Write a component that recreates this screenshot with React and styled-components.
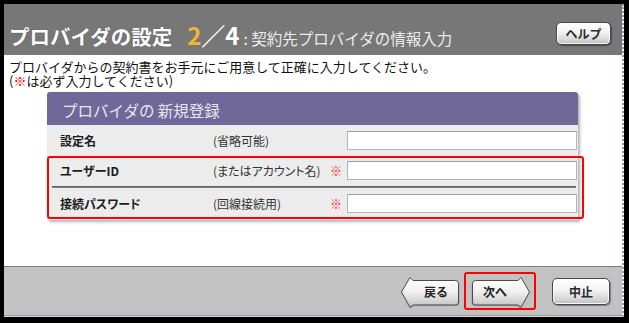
import React, { useId } from "react";
import styled, { createGlobalStyle } from "styled-components";

const Global = createGlobalStyle`
  html, body { margin: 0; padding: 0; background: #000; }
  body { font-family: "Noto Sans CJK JP", "Noto Sans", sans-serif; }
  * { box-sizing: border-box; }
`;

const Screen = styled.div`
  width: 629px;
  height: 323px;
  background: #000;
  padding: 4px 5px 6px 4px;
`;

const Window = styled.div`
  width: 620px;
  height: 313px;
  display: flex;
  flex-direction: column;
  border-right: 2px dotted #8a9cc4;
  border-bottom: 1px solid #d4dcec;
  background: #fff;
`;

const Header = styled.header`
  height: 51px;
  flex: none;
  background: #777777;
  display: flex;
  align-items: flex-start;
  padding: 19px 11px 0 5px;
`;

const TitleRow = styled.div`
  display: flex;
  align-items: baseline;
  height: 24px;
`;

const Title = styled.h1`
  margin: 0;
  font-size: 20.5px;
  line-height: 24px;
  font-weight: 700;
  color: #fff;
  text-shadow: 0 0 1px rgba(0, 0, 0, 0.4);
`;

const Step = styled.span`
  margin-left: 15px;
  font-size: 24px;
  line-height: 24px;
  font-weight: 700;
  color: #fff;
`;

const StepNum = styled.span`
  color: ${(p) => (p.$accent ? "#f2b630" : "#fff")};
`;

const Sub = styled.span`
  margin-left: 4px;
  font-size: 15.5px;
  color: #ececec;
`;

const RoundButton = styled.button`
  width: ${(p) => p.$w}px;
  height: ${(p) => p.$h}px;
  padding: 0;
  border: 1px solid #474747;
  border-radius: 5px;
  background: linear-gradient(#ffffff, #f2f2f2 45%, #d6d6d6 80%, #bdbdbd);
  box-shadow: inset 0 0 0 1px rgba(255, 255, 255, 0.85), 1px 1px 1px rgba(0, 0, 0, 0.35);
  font: 700 12px/1 "Noto Sans CJK JP", sans-serif;
  color: #2a2a2a;
  display: flex;
  align-items: center;
  justify-content: center;
`;

const HelpButton = styled(RoundButton)`
  margin-left: auto;
  margin-top: -1px;
`;

const Content = styled.main`
  flex: 1;
  padding: 5px 0 0 5px;
  background: #fff;
`;

const Lead = styled.p`
  margin: 0;
  font-size: 13px;
  line-height: 14px;
  color: #111;
`;

const LeadLine = styled.span`
  display: block;
  height: 14px;
`;

const Mark = styled.span`
  color: #f00;
`;

const Panel = styled.section`
  position: relative;
  margin: 4px 0 0 38px;
  width: 531px;
  padding-bottom: 1px;
  background: #ececec;
  border-radius: 3px 3px 0 0;
  box-shadow: 2px 2px 3px rgba(0, 0, 0, 0.3);
`;

const PanelHead = styled.h2`
  margin: 0;
  height: 33px;
  padding: 3px 0 0 15px;
  display: flex;
  align-items: center;
  background: #6f6899;
  border-radius: 3px 3px 0 0;
  color: #e9e7f3;
  font-size: 15.5px;
  font-weight: 400;
`;

const Row = styled.div`
  display: grid;
  grid-template-columns: 153px 117px 17px 230px;
  align-items: center;
  height: ${(p) => p.$h}px;
  padding: 0 1px 1px 13px;
`;

const FieldLabel = styled.span`
  font-size: 12px;
  font-weight: 700;
  color: #1b1b1b;
  font-feature-settings: "palt";
`;

const Note = styled.span`
  font-size: 12px;
  color: #333;
  font-feature-settings: "palt";
`;

const Req = styled.span`
  font-size: 12px;
  color: #f22;
`;

const Input = styled.input`
  width: 230px;
  height: 19px;
  border: 1px solid #b4b4b4;
  border-top-color: #a0a0a0;
  background: #fff;
  padding: 0 3px;
  font-size: 12px;
`;

const Divider = styled.div`
  height: 2px;
  margin: 0 2px 0 5px;
  background: linear-gradient(#585858, #8a8a8a);
`;

const Highlight = styled.div`
  position: absolute;
  top: ${(p) => p.$top}px;
  left: ${(p) => p.$left}px;
  width: ${(p) => p.$w}px;
  height: ${(p) => p.$h}px;
  border: 2px solid #ff0000;
  border-radius: 3px;
  pointer-events: none;
`;

const Footer = styled.footer`
  height: 50px;
  flex: none;
  background: #c2c2c2;
  border-top: 1px solid #7c7c7c;
  border-bottom: 1px solid #9c9c9c;
  display: flex;
  align-items: center;
  justify-content: flex-end;
  padding: 1px 12px 0 0;
  gap: 11px;
`;

const NavButton = styled.button`
  position: relative;
  width: 60px;
  height: 34px;
  padding: 0 ${(p) => (p.$dir === "next" ? "12px" : "0")} 0 ${(p) => (p.$dir === "back" ? "12px" : "0")};
  border: 0;
  background: none;
  font: 700 12px/1 "Noto Sans CJK JP", sans-serif;
  color: #222;
  display: flex;
  align-items: center;
  justify-content: center;
`;

const Shape = styled.svg`
  position: absolute;
  inset: 0;
`;

const BtnText = styled.span`
  position: relative;
`;

const NextWrap = styled.div`
  position: relative;
`;

const CancelButton = styled(RoundButton)`
  margin-left: 10px;
`;

function ArrowButton({ dir, children }) {
  const id = useId().replace(/:/g, "");
  const d =
    "M1.5 17 L10 2.5 L13 5.5 L55.5 5.5 Q58.5 5.5 58.5 8.5 L58.5 27 Q58.5 30 55.5 30 L13 30 L10 32.5 Z";
  return (
    <NavButton $dir={dir}>
      <Shape width="60" height="34" viewBox="0 0 60 34">
        <defs>
          <linearGradient id={`g${id}`} x1="0" y1="0" x2="0" y2="1">
            <stop offset="0" stopColor="#ffffff" />
            <stop offset="0.45" stopColor="#f1f1f1" />
            <stop offset="0.8" stopColor="#d4d4d4" />
            <stop offset="1" stopColor="#b8b8b8" />
          </linearGradient>
        </defs>
        <g transform={dir === "next" ? "translate(60 0) scale(-1 1)" : undefined}>
          <path d={d} fill="#888" transform="translate(1 1)" opacity="0.5" />
          <path d={d} fill={`url(#g${id})`} stroke="#4a4a4a" strokeWidth="1" strokeLinejoin="round" />
        </g>
      </Shape>
      <BtnText>{children}</BtnText>
    </NavButton>
  );
}

export default function App() {
  return (
    <>
      <Global />
      <Screen>
        <Window>
          <Header>
            <TitleRow>
              <Title>プロバイダの設定</Title>
              <Step>
                <StepNum $accent>2</StepNum>
                <StepNum>／4</StepNum>
              </Step>
              <Sub>: 契約先プロバイダの情報入力</Sub>
            </TitleRow>
            <HelpButton $w={55} $h={23}>ヘルプ</HelpButton>
          </Header>
          <Content>
            <Lead>
              <LeadLine>プロバイダからの契約書をお手元にご用意して正確に入力してください。</LeadLine>
              <LeadLine>
                (<Mark>※</Mark>は必ず入力してください)
              </LeadLine>
            </Lead>
            <Panel>
              <PanelHead>プロバイダの 新規登録</PanelHead>
              <Row $h={31}>
                <FieldLabel>設定名</FieldLabel>
                <Note>(省略可能)</Note>
                <span />
                <Input />
              </Row>
              <Row $h={30}>
                <FieldLabel>ユーザーID</FieldLabel>
                <Note>(またはアカウント名)</Note>
                <Req>※</Req>
                <Input />
              </Row>
              <Divider />
              <Row $h={31}>
                <FieldLabel>接続パスワード</FieldLabel>
                <Note>(回線接続用)</Note>
                <Req>※</Req>
                <Input type="password" />
              </Row>
              <Highlight $top={64} $left={0} $w={537} $h={63} />
            </Panel>
          </Content>
          <Footer>
            <ArrowButton dir="back">戻る</ArrowButton>
            <NextWrap>
              <ArrowButton dir="next">次へ</ArrowButton>
              <Highlight $top={-3} $left={-7} $w={72} $h={38} />
            </NextWrap>
            <CancelButton $w={58} $h={27}>中止</CancelButton>
          </Footer>
        </Window>
      </Screen>
    </>
  );
}
